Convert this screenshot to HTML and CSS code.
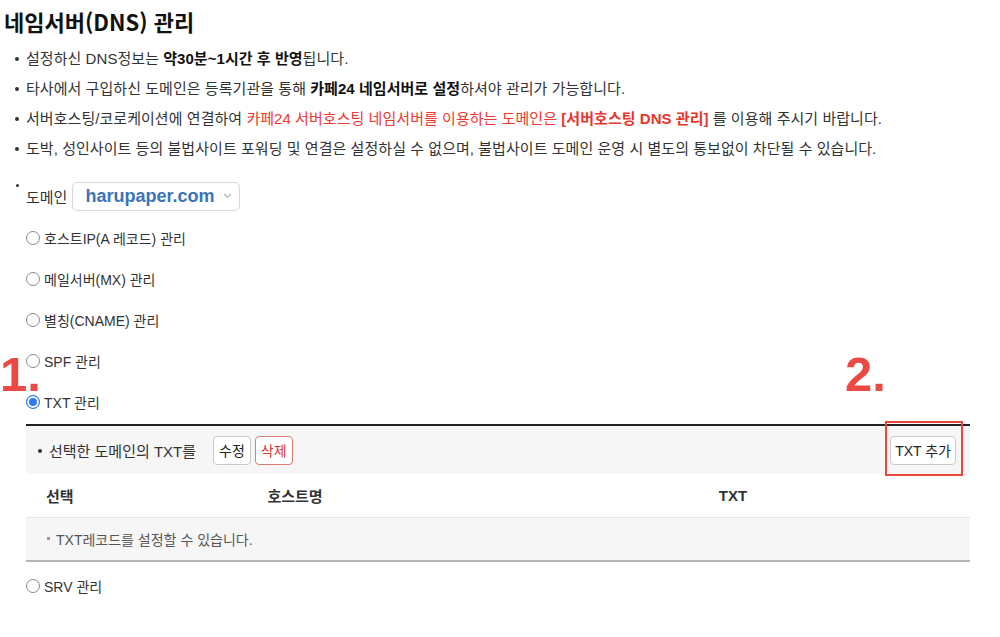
FILE: index.html
```html
<!DOCTYPE html>
<html lang="ko">
<head>
    <meta charset="UTF-8">
    <meta name="viewport" content="width=device-width, initial-scale=1.0">
    <title>네임서버(DNS) 관리</title>
    <link rel="stylesheet" href="styles.css">
</head>
<body>
    <div class="page">
        <h1>네임서버(DNS) 관리</h1>
        <ul class="notice">
            <li>설정하신 DNS정보는 <b>약30분~1시간 후 반영</b>됩니다.</li>
            <li>타사에서 구입하신 도메인은 등록기관을 통해 <b>카페24 네임서버로 설정</b>하셔야 관리가 가능합니다.</li>
            <li>서버호스팅/코로케이션에 연결하여 <span class="red">카페24 서버호스팅 네임서버를 이용하는 도메인은 <b>[서버호스팅 DNS 관리]</b></span> 를 이용해 주시기 바랍니다.</li>
            <li>도박, 성인사이트 등의 불법사이트 포워딩 및 연결은 설정하실 수 없으며, 불법사이트 도메인 운영 시 별도의 통보없이 차단될 수 있습니다.</li>
        </ul>

        <div class="domain">
            <span class="dot"></span>
            <span class="label">도메인</span>
            <div class="select">
                <span>harupaper.com</span>
                <svg width="9" height="6" viewBox="0 0 9 6"><path d="M1 1l3.5 3.5L8 1" fill="none" stroke="#a9b4c2" stroke-width="1.1"/></svg>
            </div>
        </div>

        <div class="options">
            <label class="opt"><input type="radio" name="rec"> 호스트IP(A 레코드) 관리</label>
            <label class="opt"><input type="radio" name="rec"> 메일서버(MX) 관리</label>
            <label class="opt"><input type="radio" name="rec"> 별칭(CNAME) 관리</label>
            <label class="opt"><input type="radio" name="rec"> SPF 관리</label>
            <label class="opt"><input type="radio" name="rec" checked> TXT 관리</label>
        </div>

        <div class="records">
            <div class="toolbar">
                <span class="tool-label">선택한 도메인의 TXT를</span>
                <button class="btn">수정</button>
                <button class="btn btn-red">삭제</button>
                <div class="add-wrap">
                    <button class="btn">TXT 추가</button>
                    <span class="mark-box"></span>
                </div>
            </div>
            <div class="row head">
                <div class="c1">선택</div>
                <div class="c2">호스트명</div>
                <div class="c3">TXT</div>
            </div>
            <div class="row empty">
                <div class="msg">TXT레코드를 설정할 수 있습니다.</div>
            </div>
        </div>

        <div class="options last">
            <label class="opt"><input type="radio" name="rec"> SRV 관리</label>
        </div>

        <span class="step step1">1.</span>
        <span class="step step2">2.</span>
    </div>
</body>
</html>
```

FILE: styles.css
```css
* {
    margin: 0;
    padding: 0;
    box-sizing: border-box;
}

body {
    font-family: "Liberation Sans", "Noto Sans CJK KR", sans-serif;
    color: #222;
    background: #fff;
    font-size: 14px;
}

.page {
    position: relative;
    width: 1000px;
    height: 637px;
}

h1 {
    font-family: "Noto Sans CJK KR", sans-serif;
    font-size: 22px;
    font-weight: bold;
    line-height: 30px;
    margin: 6px 0 0 4px;
    color: #111;
}

.notice {
    list-style: none;
    margin-top: 8px;
}

.notice li {
    position: relative;
    line-height: 30px;
    padding-left: 26px;
    font-size: 15px;
    letter-spacing: 0.05px;
    color: #333;
}

.notice li::before {
    content: "";
    position: absolute;
    left: 15px;
    top: 13px;
    width: 4px;
    height: 4px;
    border-radius: 50%;
    background: #333;
}

.notice b {
    color: #111;
}

.red {
    color: #f0382e;
}

.red b {
    color: #e8352b;
}

.domain {
    display: flex;
    align-items: center;
    height: 30px;
    margin-top: 17px;
    padding-left: 16px;
}

.dot {
    width: 3px;
    height: 3px;
    border-radius: 50%;
    background: #333;
    align-self: flex-start;
    margin-top: 3px;
    margin-right: 7px;
}

.label {
    font-size: 15px;
    color: #333;
}

.select {
    display: flex;
    align-items: center;
    justify-content: space-between;
    width: 168px;
    height: 29px;
    margin-left: 5px;
    padding: 0 7px 0 12px;
    border: 1px solid #d9d9d9;
    border-radius: 5px;
}

.select span {
    font-family: "Liberation Sans", sans-serif;
    font-size: 18px;
    font-weight: bold;
    color: #3b73b9;
}

.options {
    margin-top: 6px;
    padding-left: 26px;
}

.options.last {
    margin-top: 3px;
}

.opt {
    display: flex;
    align-items: center;
    height: 41px;
    font-size: 14px;
    color: #333;
    gap: 4px;
}

.opt input {
    appearance: none;
    width: 14px;
    height: 14px;
    border: 1px solid #8a8a8a;
    border-radius: 50%;
    background: #fff;
    margin: 0;
}

.opt input:checked {
    border: 1px solid #2a6ff2;
    background: #2f7bf5;
    box-shadow: inset 0 0 0 2px #fff;
}

.records {
    margin-left: 26px;
    width: 944px;
    margin-top: 2px;
}

.toolbar {
    display: flex;
    align-items: center;
    height: 50px;
    padding: 0 12px;
    background: #f6f6f6;
    border-top: 2px solid #222;
}

.tool-label {
    position: relative;
    padding-left: 11px;
    font-size: 15px;
    color: #333;
    margin-right: 17px;
}

.tool-label::before {
    content: "";
    position: absolute;
    left: 0;
    top: 9px;
    width: 4px;
    height: 4px;
    border-radius: 50%;
    background: #333;
}

.btn {
    font-family: "Liberation Sans", "Noto Sans CJK KR", sans-serif;
    height: 29px;
    padding: 0 5px;
    font-size: 14px;
    color: #222;
    background: #fff;
    border: 1px solid #c9c9c9;
    border-radius: 4px;
    margin-right: 4px;
}

.btn-red {
    color: #d7392c;
    border-color: #dc7d72;
}

.add-wrap {
    position: relative;
    margin-left: auto;
    margin-right: 2px;
}

.add-wrap .btn {
    margin-right: 0;
    padding: 0 4px;
}

.mark-box {
    position: absolute;
    left: -5px;
    top: -15px;
    width: 78px;
    height: 55px;
    border: 2px solid #e8453c;
}

.row {
    display: grid;
    grid-template-columns: 68px 402px 474px;
    align-items: center;
    height: 44px;
}

.head {
    font-weight: bold;
    font-size: 15px;
    color: #333;
    border-bottom: 1px solid #e6e6e6;
}

.head .c1 {
    padding-left: 20px;
}

.head .c2,
.head .c3 {
    text-align: center;
}

.empty {
    display: flex;
    background: #f6f6f6;
    border-bottom: 2px solid #b5b5b5;
}

.msg {
    position: relative;
    padding-left: 30px;
    font-size: 14px;
    color: #555;
}

.msg::before {
    content: "";
    position: absolute;
    left: 21px;
    top: 8px;
    width: 3px;
    height: 3px;
    background: #999;
}

.step {
    position: absolute;
    font-family: "Liberation Sans", sans-serif;
    font-weight: bold;
    font-size: 49px;
    line-height: 1;
    color: #ea4a43;
}

.step1 {
    left: 0;
    top: 344px;
}

.step2 {
    left: 845px;
    top: 344px;
}
```
